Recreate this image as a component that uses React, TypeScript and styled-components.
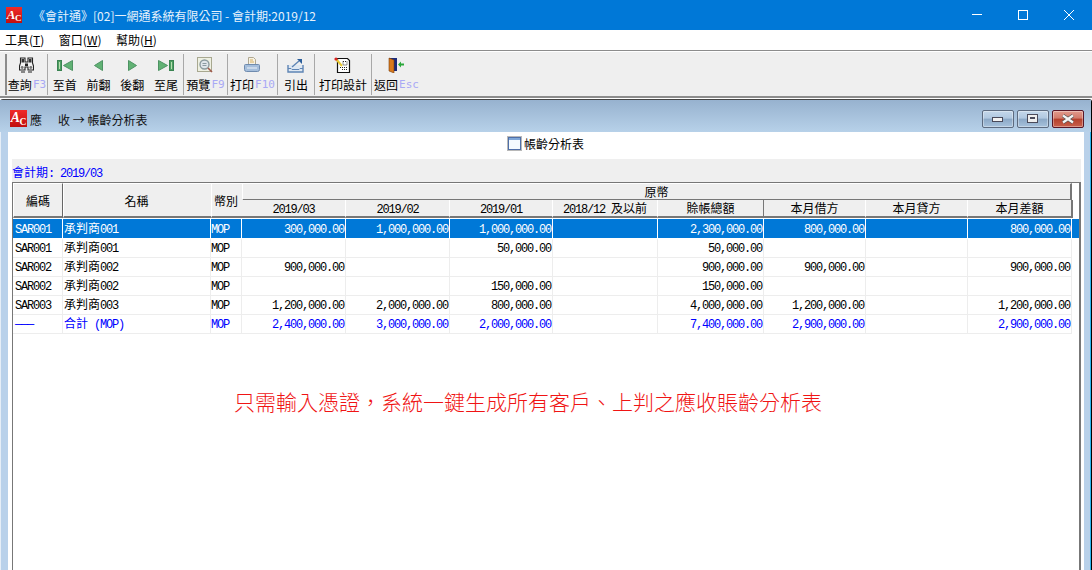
import React from "react";
import styled, { createGlobalStyle } from "styled-components";

const HAN = `"Noto Sans CJK TC", "Noto Sans CJK SC", sans-serif`;
const MONO = `"Liberation Mono", "DejaVu Sans Mono", monospace`;
const BLUE = "#0078d7";
const COLS = "50px 148px 31px 104px 104px 103px 105px 106px 102px 102px 104px 1fr";

const Global = createGlobalStyle`
  html, body { margin: 0; padding: 0; background: #fff; }
  * { box-sizing: border-box; }
`;

const Page = styled.div`
  width: 1092px; height: 570px; overflow: hidden; display: flex; flex-direction: column;
  font-family: ${HAN}; font-size: 12px; color: #000; background: #fff;
`;
const TitleBar = styled.div`
  height: 30px; flex: none; background: ${BLUE}; color: #e6f1fb; display: flex; align-items: center; padding-left: 6px;
`;
const TitleText = styled.span`margin-left: 11px; font-size: 12px; flex: 1;`;
const WinButton = styled.div`
  width: 46px; height: 30px; display: flex; align-items: center; justify-content: center;
`;
const MenuBar = styled.div`
  height: 20px; flex: none; background: #fff; display: flex; align-items: center; padding-left: 5px; gap: 14.5px;
`;
const MenuItem = styled.span`
  font-size: 12px; line-height: 20px;
`;
const Toolbar = styled.div`
  height: 48px; flex: none; background: #efefef; display: flex; padding-left: 5px;
  border-top: 1px solid #8c8c8c; border-bottom: 2px solid #8c8c8c; box-shadow: inset 0 1px 0 #fff;
`;
const ToolGroup = styled.div<{ $w: number; $first?: boolean }>`
  width: ${(p) => p.$w}px; flex: none; display: flex; margin: 3px 0 1px;
  border-left: 1px solid #a8a8a8; justify-content: space-around;
  ${(p) => (p.$first ? "border-left: 2px solid #8c8c8c;" : "")}
`;
const ToolButton = styled.div`
  display: flex; flex-direction: column; align-items: center; justify-content: flex-end;
  height: 39px; white-space: nowrap;
`;
const IconSlot = styled.div`height: 18px; display: flex; align-items: center; justify-content: center; margin-bottom: 3px;`;
const ToolLabel = styled.div`font-size: 12px; line-height: 15px; height: 15px; display: flex; align-items: center; margin-bottom: 1px;`;
const Key = styled.span`font-family: "DejaVu Sans Mono", monospace; font-size: 11px; color: #a9a9f5; margin-left: 1px;`;

const Window = styled.div`
  flex: 1; min-height: 0; margin-top: 1px; display: flex; flex-direction: column;
  background: #b9d1ea; border-top: 1px solid #444; border-right: 1px solid #000;
  box-shadow: inset -1px 0 0 #2bb5ee, inset 1px 0 0 #e6eef7;
  border-top-right-radius: 3px; border-top-left-radius: 3px;
`;
const WindowTitle = styled.div`
  height: 32px; flex: none; padding: 5px 0 0 10px; display: flex; align-items: center;
  background: linear-gradient(#97b2cf, #b7d1e9);
`;
const WindowText = styled.span`margin-left: 3px; padding-top: 2px; flex: 1; color: #101010; display: flex; align-items: center;`;
const Spaced = styled.span`margin-left: 16px;`;
const MdiButtons = styled.div`display: flex; gap: 3px; margin-right: 7px;`;
const MdiButton = styled.div<{ $close?: boolean }>`
  width: 32px; height: 18px; border-radius: 2px; display: flex; align-items: center; justify-content: center;
  border: 1px solid ${(p) => (p.$close ? "#5a1626" : "#5d6b80")};
  background: ${(p) =>
    p.$close
      ? "linear-gradient(#e29a8c 0%, #d27a6a 45%, #b5402c 50%, #c9604c 100%)"
      : "linear-gradient(#c4d7ea 0%, #b0c8e0 45%, #8ba8c6 50%, #a7c2dc 100%)"};
  box-shadow: inset 0 0 0 1px rgba(255,255,255,.35);
`;
const Client = styled.div`
  flex: 1; min-height: 0; margin: 0 7px 0 8px; background: #fff; padding: 0 3px 0 4px; display: flex; flex-direction: column;
`;
const FormHead = styled.div`
  height: 27px; flex: none; display: flex; align-items: center; justify-content: center; gap: 2px; font-size: 12px;
  padding: 0 2px 4px 0;
`;
const PeriodBar = styled.div`
  height: 23px; flex: none; background: #efefef; color: #0000ff; line-height: 17px; padding-top: 4px;
`;
const Mono = styled.span`font-family: ${MONO}; font-size: 12px; letter-spacing: -1.2px; white-space: pre;`;
const GridFrame = styled.div`
  flex: 1; min-height: 0; background: #fff; border: 1px solid #777; border-bottom: 0; border-right-width: 2px; border-left-width: 1px;
`;
const HeaderGrid = styled.div`
  display: grid; grid-template-columns: ${COLS}; grid-template-rows: 17px 18px; height: 35px; margin-bottom: 1px;
`;
const HeadCell = styled.div<{ $edge?: boolean }>`
  grid-row: 1 / span 2; background: #efefef; display: flex; align-items: center; justify-content: center;
  border-top: 1px solid #fff; border-left: 1px solid #fff; border-bottom: 2px solid #777;
  ${(p) => (p.$edge ? "border-right: 1px solid #666;" : "padding-right: 2px;")}
  font-size: 12px;
`;
const GroupCell = styled.div`
  grid-column: 4 / span 8; background: #efefef; text-align: center; font-size: 12px; line-height: 16px;
  border-top: 1px solid #fff; border-left: 1px solid #fff; border-right: 2px solid #777; border-bottom: 2px solid #777;
  height: 18px;
`;
const SubCell = styled.div<{ $edge?: boolean; $last?: boolean; $start?: boolean }>`
  background: #efefef; text-align: center; font-size: 12px; height: 18px; line-height: 15px; white-space: pre;
  border-right: 1px solid ${(p) => (p.$edge ? "#777" : "#fff")}; border-bottom: 2px solid #777;
  ${(p) => (p.$start ? "grid-column: 4;" : "")}
  ${(p) => (p.$last ? "border-right: 2px solid #777; margin-right: -1px;" : "")}
`;
const Row = styled.div<{ $selected?: boolean; $total?: boolean }>`
  display: grid; grid-template-columns: ${COLS}; height: ${(p) => (p.$selected ? 20 : 19)}px;
  color: ${(p) => (p.$selected ? "#fff" : p.$total ? "#0000ff" : "#000")};
`;
const Cell = styled.div<{ $selected?: boolean; $num?: boolean; $pad?: number }>`
  overflow: hidden; white-space: pre; line-height: ${(p) => (p.$selected ? 18 : 16)}px;
  text-align: ${(p) => (p.$num ? "right" : "left")};
  padding: 0 ${(p) => (p.$num ? 1 : 0)}px 1px ${(p) => p.$pad ?? 0}px;
  font-size: 12px;
  background: ${(p) => (p.$selected ? BLUE : "#fff")};
  border-right: 1px solid ${(p) => (p.$selected ? "#fff" : "#ededed")};
  border-bottom: 1px solid ${(p) => (p.$selected ? "#fff" : "#ededed")};
`;
const Stub = styled.div<{ $selected?: boolean }>`
  background: ${(p) => (p.$selected ? BLUE : "#fff")};
  border-bottom: 1px solid #fff;
`;
const Slogan = styled.div`
  margin: 52px 0 0 221px; font-size: 21px; line-height: 30px; color: #f01414; white-space: nowrap; font-weight: 300;
`;

const Logo = ({ size = 16 }: { size?: number }) => (
  <svg width={size} height={size} viewBox="0 0 16 16">
    <defs>
      <linearGradient id="acg" x1="0" y1="0" x2="0" y2="1">
        <stop offset="0" stopColor="#f02a2a" />
        <stop offset="1" stopColor="#c00e0e" />
      </linearGradient>
    </defs>
    <rect width="16" height="16" fill="url(#acg)" />
    <text x=".8" y="11.5" fontFamily="Liberation Serif" fontStyle="italic" fontWeight="700" fontSize="13" fill="#fff">A</text>
    <text x="9" y="14" fontFamily="Liberation Serif" fontWeight="700" fontSize="9" fill="#fff">C</text>
  </svg>
);
const Binoculars = () => (
  <svg width="15" height="16" viewBox="0 0 15 16" fill="none">
    <path d="M1.5 1h4.5v4h3V1h4.5v5l1 3v4H9v-3H6v3H.5V9l1-3z" fill="#f2f2f2" stroke="#222" strokeWidth="1.1" />
    <path d="M2.5 2h2.5v3.5H2.5zM10 2h2.5v3.5H10z" fill="#333" />
    <path d="M6 6.5h3V9H6z" fill="#222" />
    <path d="M2 15h4M9 15h4" stroke="#666" strokeWidth="1.4" />
    <circle cx="3.2" cy="10.5" r="1.4" fill="#777" /><circle cx="11.8" cy="10.5" r="1.4" fill="#777" />
  </svg>
);
const G = { fill: "#61b274", stroke: "#4d9263" };
const Bar = ({ x }: { x: number }) => (
  <>
    <rect x={x + 0.5} y=".5" width="4" height="10" fill="#4f9f63" stroke="#3a8452" />
    <rect x={x + 2} y="2" width="1" height="7" fill="#b8e0b0" />
  </>
);
const First = () => (
  <svg width="16" height="11" viewBox="0 0 16 11"><Bar x={0} /><path d="M15.5 .5v10L6.5 5.5z" {...G} /></svg>
);
const Prev = () => (
  <svg width="9" height="11" viewBox="0 0 9 11"><path d="M8.5 .5v10L.5 5.5z" {...G} /></svg>
);
const Next = () => (
  <svg width="9" height="11" viewBox="0 0 9 11"><path d="M.5 .5v10L8.5 5.5z" {...G} /></svg>
);
const Last = () => (
  <svg width="16" height="11" viewBox="0 0 16 11"><path d="M.5 .5v10L9.5 5.5z" {...G} /><Bar x={11} /></svg>
);
const Preview = () => (
  <svg width="16" height="17" viewBox="0 0 16 17" fill="none">
    <rect x=".5" y=".5" width="14" height="14" fill="#eef0e2" stroke="#a8a890" />
    <circle cx="7.5" cy="7.5" r="4.5" fill="#dfe6ea" stroke="#8a9a9e" strokeWidth="1.4" />
    <path d="M5.5 6.5h4M5.5 8.5h4" stroke="#8a9aa0" />
    <path d="M11 11l4 4" stroke="#a0584a" strokeWidth="1.6" />
  </svg>
);
const Printer = () => (
  <svg width="16" height="16" viewBox="0 0 16 16" fill="none">
    <path d="M4.5 .5h5l2 2v6h-7z" fill="#f6f1e3" stroke="#b0a890" />
    <path d="M6 3h3M6 5h4" stroke="#d8b060" />
    <path d="M1.5 7.5h13a1 1 0 011 1v4a2 2 0 01-2 2h-11a2 2 0 01-2-2v-4a1 1 0 011-1z" fill="#a5bedb" stroke="#6f8bae" />
    <path d="M3 11h10" stroke="#eef3f9" />
  </svg>
);
const Export = () => (
  <svg width="17" height="15" viewBox="0 0 17 15" fill="none">
    <path d="M1 7v7h15V7" stroke="#5f85b5" strokeWidth="1.4" fill="#dfe8f2" />
    <path d="M1 10.5h3l1 1h7l1-1h3" stroke="#5f85b5" />
    <path d="M5 9l7-6" stroke="#5f85b5" strokeWidth="1.4" />
    <path d="M10 1h5v5z" fill="#2c5f9c" />
  </svg>
);
const Design = () => (
  <svg width="17" height="16" viewBox="0 0 17 16" fill="none">
    <path d="M3.5 1.5h10l2 2v12h-12z" fill="#fff" stroke="#111" strokeWidth="1.2" />
    <path d="M6 10.5h7M8 12.5h5M9 4.5h4v3.5H9z" stroke="#222" strokeDasharray="1 1" />
    <path d="M2 2l6 7" stroke="#e8c830" strokeWidth="2" />
    <circle cx="2" cy="2" r="1.6" fill="#d82020" />
  </svg>
);
const Door = () => (
  <svg width="16" height="16" viewBox="0 0 16 16" fill="none">
    <path d="M1 1h8v13H1z" fill="#1b2a7a" />
    <path d="M1 1l5 2v13l-5-2z" fill="#d8791c" stroke="#7a3d0c" strokeWidth=".6" />
    <path d="M10 7.5l3-3v2h3v2h-3v2z" fill="#2ba83a" />
  </svg>
);
const FormIcon = () => (
  <svg width="15" height="15" viewBox="0 0 15 15">
    <rect width="15" height="15" fill="#b8b8b8" />
    <rect x="1.5" y="1.5" width="12" height="12" fill="#f4fafe" stroke="#4f6fa8" />
    <rect x="2" y="2" width="11" height="2" fill="#7ea6d8" />
  </svg>
);

type RowData = { code: string; name: string; sfx: string; v: string[]; sel?: boolean; total?: boolean };
const rows: RowData[] = [
  { code: "SAR001", name: "承判商", sfx: "001", sel: true, v: ["300,000.00", "1,000,000.00", "1,000,000.00", "", "2,300,000.00", "800,000.00", "", "800,000.00"] },
  { code: "SAR001", name: "承判商", sfx: "001", v: ["", "", "50,000.00", "", "50,000.00", "", "", ""] },
  { code: "SAR002", name: "承判商", sfx: "002", v: ["900,000.00", "", "", "", "900,000.00", "900,000.00", "", "900,000.00"] },
  { code: "SAR002", name: "承判商", sfx: "002", v: ["", "", "150,000.00", "", "150,000.00", "", "", ""] },
  { code: "SAR003", name: "承判商", sfx: "003", v: ["1,200,000.00", "2,000,000.00", "800,000.00", "", "4,000,000.00", "1,200,000.00", "", "1,200,000.00"] },
  { code: "———", name: "合計", sfx: " (MOP)", total: true, v: ["2,400,000.00", "3,000,000.00", "2,000,000.00", "", "7,400,000.00", "2,900,000.00", "", "2,900,000.00"] },
];

const tools: { w: number; items: { icon: React.ReactNode; label: string; key?: string }[] }[] = [
  { w: 42, items: [{ icon: <Binoculars />, label: "查詢", key: "F3" }] },
  { w: 136, items: [
    { icon: <First />, label: "至首" }, { icon: <Prev />, label: "前翻" },
    { icon: <Next />, label: "後翻" }, { icon: <Last />, label: "至尾" },
  ] },
  { w: 44, items: [{ icon: <Preview />, label: "預覽", key: "F9" }] },
  { w: 50, items: [{ icon: <Printer />, label: "打印", key: "F10" }] },
  { w: 37, items: [{ icon: <Export />, label: "引出" }] },
  { w: 57, items: [{ icon: <Design />, label: "打印設計" }] },
  { w: 50, items: [{ icon: <Door />, label: "返回", key: "Esc" }] },
];

export default function App() {
  return (
    <Page>
      <Global />
      <TitleBar>
        <Logo />
        <TitleText>《會計通》[02]一網通系統有限公司 - 會計期:2019/12</TitleText>
        <WinButton>
          <svg width="10" height="10" viewBox="0 0 10 10"><path d="M0 4.5h10" stroke="#fff" /></svg>
        </WinButton>
        <WinButton>
          <svg width="10" height="10" viewBox="0 0 10 10"><rect x=".5" y=".5" width="9" height="9" fill="none" stroke="#fff" /></svg>
        </WinButton>
        <WinButton>
          <svg width="10" height="10" viewBox="0 0 10 10"><path d="M0 0l10 10M10 0L0 10" stroke="#fff" /></svg>
        </WinButton>
      </TitleBar>
      <MenuBar>
        <MenuItem>工具(<u>T</u>)</MenuItem>
        <MenuItem>窗口(<u>W</u>)</MenuItem>
        <MenuItem>幫助(<u>H</u>)</MenuItem>
      </MenuBar>
      <Toolbar>
        {tools.map((g, i) => (
          <ToolGroup key={i} $w={g.w} $first={i === 0}>
            {g.items.map((t) => (
              <ToolButton key={t.label}>
                <IconSlot>{t.icon}</IconSlot>
                <ToolLabel>{t.label}{t.key && <Key>{t.key}</Key>}</ToolLabel>
              </ToolButton>
            ))}
          </ToolGroup>
        ))}
      </Toolbar>
      <Window>
        <WindowTitle>
          <Logo size={17} />
          <WindowText>應<Spaced>收 → 帳齡分析表</Spaced></WindowText>
          <MdiButtons>
            <MdiButton>
              <svg width="12" height="6" viewBox="0 0 12 6"><rect x=".5" y="1.5" width="10" height="4" fill="#f2f2f2" stroke="#4a4a5a" /></svg>
            </MdiButton>
            <MdiButton>
              <svg width="12" height="9" viewBox="0 0 12 9"><rect x=".5" y=".5" width="10" height="8" fill="#eee" stroke="#4a4a5a" /><rect x="3" y="3" width="5" height="2" fill="#4a4a5a" /></svg>
            </MdiButton>
            <MdiButton $close>
              <svg width="14" height="10" viewBox="0 0 14 10"><path d="M2 1.5l10 7M12 1.5l-10 7" stroke="#555" strokeWidth="3.6" /><path d="M2 1.5l10 7M12 1.5l-10 7" stroke="#f4f4f4" strokeWidth="2.2" /></svg>
            </MdiButton>
          </MdiButtons>
        </WindowTitle>
        <Client>
          <FormHead><FormIcon />帳齡分析表</FormHead>
          <PeriodBar>會計期<Mono>: 2019/03</Mono></PeriodBar>
          <GridFrame>
            <HeaderGrid>
              <HeadCell $edge>編碼</HeadCell>
              <HeadCell>名稱</HeadCell>
              <HeadCell>幣別</HeadCell>
              <GroupCell>原幣</GroupCell>
              <SubCell $start><Mono>2019/03</Mono></SubCell>
              <SubCell><Mono>2019/02</Mono></SubCell>
              <SubCell><Mono>2019/01</Mono></SubCell>
              <SubCell><Mono>2018/12 </Mono>及以前</SubCell>
              <SubCell $edge>賒帳總額</SubCell>
              <SubCell>本月借方</SubCell>
              <SubCell>本月貸方</SubCell>
              <SubCell $last>本月差額</SubCell>
            </HeaderGrid>
            {rows.map((r, i) => (
              <Row key={i} $selected={r.sel} $total={r.total}>
                <Cell $selected={r.sel} $pad={2}><Mono>{r.code}</Mono></Cell>
                <Cell $selected={r.sel} $pad={1}>{r.name}<Mono>{r.sfx}</Mono></Cell>
                <Cell $selected={r.sel}><Mono>MOP</Mono></Cell>
                {r.v.map((v, j) => (
                  <Cell key={j} $selected={r.sel} $num>{v && <Mono>{v}</Mono>}</Cell>
                ))}
                <Stub $selected={r.sel} />
              </Row>
            ))}
            <Slogan>{"只需輸入憑證\uFF0C系統一鍵生成所有客戶、上判之應收賬齡分析表"}</Slogan>
          </GridFrame>
        </Client>
      </Window>
    </Page>
  );
}
